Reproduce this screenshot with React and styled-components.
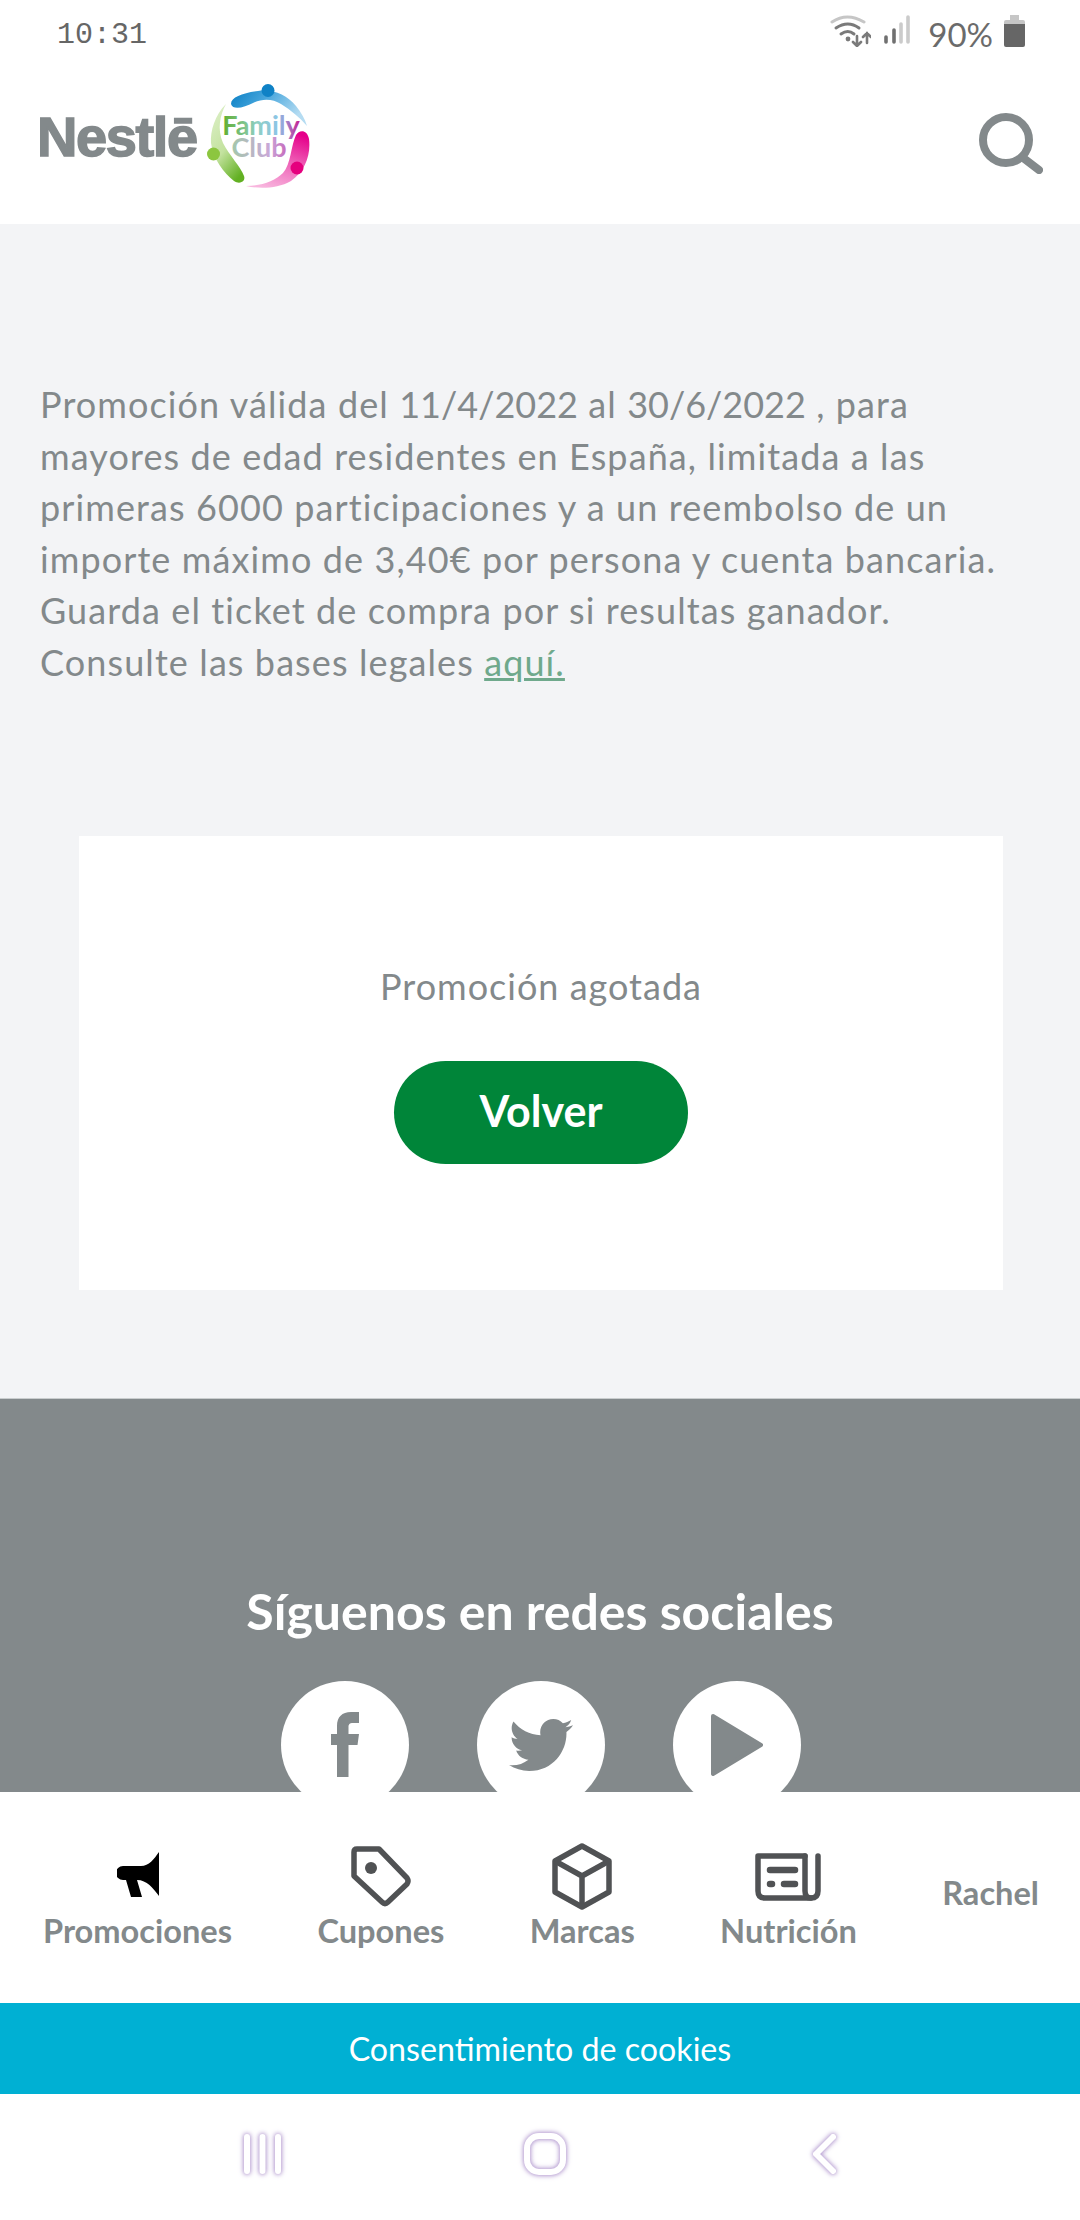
import React from 'react';
import styled, { createGlobalStyle } from 'styled-components';
import { FaTwitter } from 'react-icons/fa';

const GlobalStyle = createGlobalStyle`
    html, body {
        margin: 0;
        padding: 0;
        background: #fff;
    }
    * {
        box-sizing: border-box;
    }
`;

const FONT = `"Lato", "Open Sans", sans-serif`;

const navItems = [
    { label: 'Promociones', icon: <MegaphoneIcon /> },
    { label: 'Cupones', icon: <TagIcon /> },
    { label: 'Marcas', icon: <CubeIcon /> },
    { label: 'Nutrición', icon: <NewsIcon /> },
];

function MegaphoneIcon() {
    return (
        <svg width="42" height="49" viewBox="0 0 42 49">
            <path fill="#000" d="M42 0 V44 C36 36 30 28 20 28 L25 45 H14 L9 28 H6 A7 7 0 0 1 6 14 H24 C32 14 37 7 42 0 Z" />
        </svg>
    );
}

function TagIcon() {
    return (
        <svg width="60" height="61" viewBox="0 0 60 61" fill="none" stroke="#505254" strokeWidth="5.5" strokeLinejoin="round">
            <path d="M3 6 Q3 3 6 3 H28 L56 32 Q58 35 56 38 L37 56 Q34 59 31 56 L3 30 Z" />
            <circle cx="20" cy="22" r="6" fill="#505254" stroke="none" />
        </svg>
    );
}

function CubeIcon() {
    return (
        <svg width="60" height="67" viewBox="0 0 60 67" fill="none" stroke="#505254" strokeWidth="5.5" strokeLinejoin="round">
            <path d="M30 3 L57 18 V49 L30 64 L3 49 V18 Z" />
            <path d="M3 18 L30 33 L57 18 M30 33 V64" />
        </svg>
    );
}

function NewsIcon() {
    return (
        <svg width="66" height="48" viewBox="0 0 66 48" fill="none" stroke="#505254" strokeWidth="5.5" strokeLinecap="round" strokeLinejoin="round">
            <path d="M50 3 H3 V38 Q3 45 10 45 H56 Q63 45 63 38 V3" />
            <path d="M50 3 V38 Q50 45 56 45" />
            <path d="M15 17 H40" strokeWidth="6.5" />
            <path d="M15 31 H17 M29 31 H40" strokeWidth="6.5" />
        </svg>
    );
}

function WifiIcon() {
    return (
        <svg width="41" height="32" viewBox="0 0 41 32" fill="none" strokeLinecap="round" strokeWidth="3">
            <path d="M2 7 Q17 -3 34 7" stroke="#c6c6c6" />
            <path d="M6 13 Q18 5 29 13" stroke="#7a7a7a" />
            <path d="M11 19 Q18 14 24 19" stroke="#7a7a7a" />
            <circle cx="18" cy="24" r="2.4" fill="#7a7a7a" />
            <path d="M27 21 V31 M23 27 L27 31 L31 27" stroke="#7a7a7a" strokeWidth="2.6" />
            <path d="M37 28 V18 M33 22 L37 18 L41 22" stroke="#7a7a7a" strokeWidth="2.6" />
        </svg>
    );
}

function SignalIcon() {
    return (
        <svg width="27" height="29" viewBox="0 0 27 29" strokeLinecap="round" strokeWidth="3.6" fill="none">
            <path d="M3 22 V27" stroke="#707070" />
            <path d="M11 15 V27" stroke="#707070" />
            <path d="M18 9 V27" stroke="#cbcbcb" />
            <path d="M25 2 V27" stroke="#cbcbcb" />
        </svg>
    );
}

function BatteryIcon() {
    return (
        <svg width="21" height="32" viewBox="0 0 21 32">
            <path fill="#c6c6c6" d="M6 0 H15 V5 H19 Q21 5 21 7 V9 H0 V7 Q0 5 2 5 H6 Z" />
            <path fill="#666" d="M0 9 H21 V30 Q21 32 19 32 H2 Q0 32 0 30 Z" />
        </svg>
    );
}

function SearchIcon() {
    return (
        <svg width="64" height="61" viewBox="0 0 64 61" fill="none" stroke="#83898b" strokeLinecap="round">
            <circle cx="27" cy="27" r="23" strokeWidth="8" />
            <path d="M43 44 L60 57" strokeWidth="8" />
        </svg>
    );
}

function FacebookIcon() {
    return (
        <svg width="28" height="65" viewBox="0 0 28 65">
            <path fill="#83898b" d="M17.5 65 H6 V33 H0 V22 H6 V14 C6 5 11 0 20 0 H28 V11 H22 C18.5 11 17.5 12.5 17.5 15 V22 H28 L26.5 33 H17.5 Z" />
        </svg>
    );
}

function PlayIcon() {
    return (
        <svg width="52" height="64" viewBox="0 0 52 64">
            <path fill="#83898b" stroke="#83898b" strokeWidth="4" strokeLinejoin="round" d="M2 3 L50 32 L2 61 Z" />
        </svg>
    );
}

function MenuKey() {
    return (
        <NavGlyph width="39" height="40" viewBox="0 0 39 40">
            <path d="M4 3 V37 M19.5 3 V37 M35 3 V37" />
        </NavGlyph>
    );
}

function HomeKey() {
    return (
        <NavGlyph $gapRight={5} width="44" height="44" viewBox="0 0 44 44">
            <rect x="4" y="4" width="36" height="36" rx="12" />
        </NavGlyph>
    );
}

function BackKey() {
    return (
        <NavGlyph width="25" height="40" viewBox="0 0 25 40">
            <path d="M21 3 L4 20 L21 37" />
        </NavGlyph>
    );
}

function FamilyClubLogo() {
    return (
        <svg width="104" height="107" viewBox="0 0 104 107">
            <defs>
                <linearGradient id="fcBlue" x1="0" y1="0" x2="1" y2="0.4">
                    <stop offset="0" stopColor="#0a7fc4" />
                    <stop offset="0.45" stopColor="#45a5dc" />
                    <stop offset="1" stopColor="#b5dcf2" />
                </linearGradient>
                <linearGradient id="fcGreen" x1="0.2" y1="0" x2="0.7" y2="1">
                    <stop offset="0" stopColor="#dcefc6" />
                    <stop offset="0.55" stopColor="#c3e29e" />
                    <stop offset="1" stopColor="#62b022" />
                </linearGradient>
                <linearGradient id="fcPink" x1="0.7" y1="0" x2="0.3" y2="1">
                    <stop offset="0" stopColor="#e5008a" />
                    <stop offset="0.45" stopColor="#ee5db5" />
                    <stop offset="1" stopColor="#f8b6de" />
                </linearGradient>
                <linearGradient id="fcFamily" x1="0" y1="0" x2="1" y2="0">
                    <stop offset="0" stopColor="#5fae2e" />
                    <stop offset="0.45" stopColor="#8fcfc4" />
                    <stop offset="0.72" stopColor="#8cc4e8" />
                    <stop offset="1" stopColor="#c8188e" />
                </linearGradient>
                <linearGradient id="fcClub" x1="0" y1="0" x2="1" y2="0">
                    <stop offset="0" stopColor="#9ad0a0" />
                    <stop offset="0.6" stopColor="#c9a8d8" />
                    <stop offset="1" stopColor="#c43aa6" />
                </linearGradient>
            </defs>
            <path fill="url(#fcBlue)" d="M24 21 C24 14 36 10 51 8 C66 6 80 12 89 23 C94 29 98 36 100 43 C92 34 84 27 74 21 C66 16 56 15 46 20 C38 24 26 28 24 21 Z" />
            <circle cx="61" cy="7.5" r="6.5" fill="#0f82c6" />
            <path fill="url(#fcGreen)" d="M19 21 C8 32 3 48 4 60 C6 76 17 90 27 98 C33 102 39 98 37 93 C34 84 22 72 16 60 C10 46 13 32 19 21 Z" />
            <circle cx="6.5" cy="71" r="6.5" fill="#8cc63f" />
            <path fill="url(#fcPink)" d="M89 52 C92 47 100 46 102 56 C104 72 98 88 84 98 C70 106 52 106 39 103 C54 103 68 98 76 90 C84 81 84 62 89 52 Z" />
            <circle cx="90" cy="85" r="6.5" fill="#e5007e" />
            <FamilyText>
                <tspan x="54" y="52" fill="url(#fcFamily)">Family</tspan>
                <tspan x="52" y="74" fill="url(#fcClub)">Club</tspan>
            </FamilyText>
        </svg>
    );
}

const App = () => {
    return (
        <Screen>
            <GlobalStyle />
            <Header>
                <StatusBar>
                    <Clock>10:31</Clock>
                    <StatusRight>
                        <WifiIcon />
                        <SignalIcon />
                        <Percent>90%</Percent>
                        <BatteryIcon />
                    </StatusRight>
                </StatusBar>
                <TopBar>
                    <Logo>
                        <Nestle>Nestlē</Nestle>
                        <FamilyClubLogo />
                    </Logo>
                    <SearchButton><SearchIcon /></SearchButton>
                </TopBar>
            </Header>
            <Main>
                <Legal>
                    Promoción válida del <Digits>11/4/2022</Digits> al <Digits>30/6/2022</Digits> , para<br />
                    mayores de edad residentes en España, limitada a las<br />
                    primeras 6000 participaciones y a un reembolso de un<br />
                    importe máximo de 3,40€ por persona y cuenta bancaria.<br />
                    Guarda el ticket de compra por si resultas ganador.<br />
                    Consulte las bases legales <LegalLink href="#">aquí.</LegalLink>
                </Legal>
                <Card>
                    <CardText>Promoción agotada</CardText>
                    <BackButton>Volver</BackButton>
                </Card>
                <Footer>
                    <FooterTitle>Síguenos en redes sociales</FooterTitle>
                    <SocialRow>
                        <SocialCircle><FacebookIcon /></SocialCircle>
                        <SocialCircle><FaTwitter size={64} color="#83898b" /></SocialCircle>
                        <SocialCircle><PlayIcon /></SocialCircle>
                    </SocialRow>
                </Footer>
            </Main>
            <BottomNav>
                {navItems.map((item) => (
                    <NavItem key={item.label}>
                        <NavIcon>{item.icon}</NavIcon>
                        <NavLabel>{item.label}</NavLabel>
                    </NavItem>
                ))}
                <NavUser>Rachel</NavUser>
            </BottomNav>
            <CookieBar>Consentimiento de cookies</CookieBar>
            <SystemBar>
                <MenuKey />
                <HomeKey />
                <BackKey />
            </SystemBar>
        </Screen>
    );
};

const Screen = styled.div`
    width: 1080px;
    height: 2220px;
    display: flex;
    flex-direction: column;
    overflow: hidden;
    font-family: ${FONT};
    background: #fff;
`;

const Header = styled.header`
    height: 224px;
    flex: none;
    background: #fff;
`;

const StatusBar = styled.div`
    height: 70px;
    padding: 15px 55px 0 57px;
    display: flex;
    justify-content: space-between;
    align-items: flex-start;
`;

const Clock = styled.span`
    font-family: "Liberation Mono", monospace;
    font-size: 30px;
    line-height: 36px;
    margin-top: 2px;
    color: #666;
`;

const StatusRight = styled.div`
    display: flex;
    align-items: flex-start;
    gap: 12px;
`;

const Percent = styled.span`
    font-size: 33px;
    line-height: 38px;
    margin: 0 -1px 0 6px;
    color: #6b6b6b;
`;

const TopBar = styled.div`
    height: 154px;
    padding: 0 37px 22px 37px;
    display: flex;
    justify-content: space-between;
    align-items: center;
`;

const Logo = styled.div`
    display: flex;
    align-items: center;
    gap: 10px;
`;

const Nestle = styled.span`
    font-family: "Liberation Sans", sans-serif;
    font-weight: 700;
    font-size: 56px;
    line-height: 56px;
    letter-spacing: -1.4px;
    color: #83898b;
    -webkit-text-stroke: 1.5px #83898b;
    margin-top: 2px;
`;

const SearchButton = styled.div`
    display: flex;
    margin-top: 15px;
`;

const FamilyText = styled.text`
    font-family: "Lato", sans-serif;
    font-weight: 700;
    font-size: 27px;
    text-anchor: middle;
`;

const Main = styled.main`
    flex: 1;
    min-height: 0;
    overflow: hidden;
    background: #f3f4f6;
    padding-top: 155px;
`;

const Legal = styled.p`
    margin: 0 40px;
    font-size: 36px;
    line-height: 51.6px;
    letter-spacing: 1.1px;
    color: #83898b;
    white-space: nowrap;
`;

const Digits = styled.span`
    letter-spacing: 0;
`;

const LegalLink = styled.a`
    color: #6fa98c;
    text-decoration: underline;
`;

const Card = styled.section`
    width: 924px;
    height: 454px;
    margin: 147px 0 0 79px;
    padding-top: 123px;
    background: #fff;
    display: flex;
    flex-direction: column;
    align-items: center;
`;

const CardText = styled.p`
    margin: 0;
    font-size: 36px;
    line-height: 54px;
    letter-spacing: 1px;
    color: #83898b;
`;

const BackButton = styled.button`
    width: 294px;
    height: 103px;
    margin-top: 48px;
    padding: 0 0 4px;
    border: none;
    border-radius: 52px;
    background: #008539;
    color: #fff;
    font-family: ${FONT};
    font-size: 43px;
    font-weight: 700;
`;

const Footer = styled.footer`
    margin-top: 108px;
    padding-top: 178px;
    height: 600px;
    background: #83898b;
    border-top: 1px solid #c9cdce;
    display: flex;
    flex-direction: column;
    align-items: center;
`;

const FooterTitle = styled.h2`
    margin: 0;
    font-size: 50px;
    line-height: 68px;
    font-weight: 700;
    color: #fff;
`;

const SocialRow = styled.div`
    display: flex;
    gap: 68px;
    margin: 36px 0 0 2px;
`;

const SocialCircle = styled.div`
    width: 128px;
    height: 128px;
    border-radius: 50%;
    background: #fff;
    display: flex;
    align-items: center;
    justify-content: center;
`;

const BottomNav = styled.nav`
    height: 211px;
    flex: none;
    padding: 50px 41px 0 43px;
    background: #fff;
    display: flex;
    justify-content: space-between;
    align-items: flex-start;
`;

const NavItem = styled.div`
    display: flex;
    flex-direction: column;
    align-items: center;
`;

const NavIcon = styled.div`
    height: 69px;
    display: flex;
    align-items: center;
    justify-content: center;
`;

const NavLabel = styled.span`
    font-size: 32.6px;
    line-height: 40px;
    font-weight: 700;
    color: #83898b;
`;

const NavUser = styled(NavLabel)`
    margin-top: 31px;
`;

const CookieBar = styled.div`
    height: 91px;
    flex: none;
    background: #00b0d3;
    color: #fff;
    font-size: 32.2px;
    display: flex;
    align-items: center;
    justify-content: center;
`;

const SystemBar = styled.div`
    height: 126px;
    flex: none;
    padding: 0 243px 6px;
    background: #fff;
    display: flex;
    align-items: center;
    justify-content: space-between;
`;

const NavGlyph = styled.svg`
    margin-right: ${(props) => props.$gapRight || 0}px;
    fill: none;
    stroke: #fff;
    stroke-width: 6;
    stroke-linecap: round;
    stroke-linejoin: round;
    overflow: visible;
    filter: drop-shadow(0 0 2px #b79fd2) drop-shadow(0 0 2px #cdbde0);
`;

export default App;
